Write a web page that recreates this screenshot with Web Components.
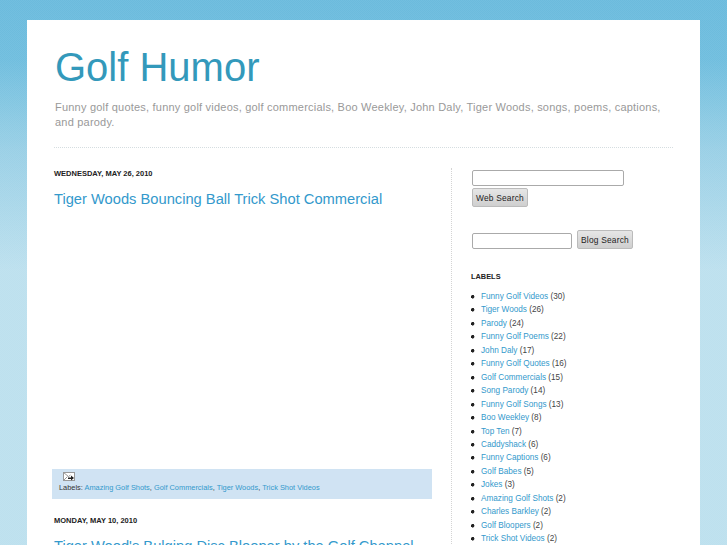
<!DOCTYPE html>
<html>
<head>
<meta charset="utf-8">
<title>Golf Humor</title>
<style>
html, body { height: 100%; }
body {
    margin: 0;
    height: 545px;
    overflow: hidden;
    font-family: "Liberation Sans", Arial, sans-serif;
    background:
        repeating-conic-gradient(rgba(255,255,255,.05) 0 25%, transparent 0 50%) 0 0 / 2px 2px,
        linear-gradient(to bottom, #6bbbdd 0, #70bede 60px, #9ad0e6 150px, #bde0ee 270px, #bde0ee 545px);
}
</style>
</head>
<body>
<blog-page>
    <blog-header slot="header" title="Golf Humor">Funny golf quotes, funny golf videos, golf commercials, Boo Weekley, John Daly, Tiger Woods, songs, poems, captions, and parody.</blog-header>
    <div slot="main">
        <blog-post date="Wednesday, May 26, 2010" title="Tiger Woods Bouncing Ball Trick Shot Commercial" labels="Amazing Golf Shots,Golf Commercials,Tiger Woods,Trick Shot Videos" body="260"></blog-post>
        <blog-post date="Monday, May 10, 2010" title="Tiger Wood's Bulging Disc Blooper by the Golf Channel" body="250"></blog-post>
    </div>
    <blog-sidebar slot="side"></blog-sidebar>
</blog-page>

<script>
class BlogPage extends HTMLElement {
    constructor() {
        super();
        this.attachShadow({ mode: 'open' });
        this.shadowRoot.innerHTML = `
        <style>
            :host { display: block; padding: 20px 27px 0; }
            .card { background: #fff; height: 525px; padding: 0 27px; box-sizing: border-box; overflow: hidden; }
            .cols { display: grid; grid-template-columns: 397px 1fr; }
            .main { padding-top: 20px; min-width: 0; }
            .side { margin-top: 20px; border-left: 1px dotted #d4d4d4; padding-left: 20px; }
        </style>
        <div class="card">
            <slot name="header"></slot>
            <div class="cols">
                <div class="main"><slot name="main"></slot></div>
                <div class="side"><slot name="side"></slot></div>
            </div>
        </div>`;
    }
}
customElements.define('blog-page', BlogPage);

class BlogHeader extends HTMLElement {
    constructor() {
        super();
        this.attachShadow({ mode: 'open' });
        this.shadowRoot.innerHTML = `
        <style>
            :host { display: block; border-bottom: 1px dotted #d5dde0; height: 128px; box-sizing: border-box; }
            h1 { margin: 0 0 0 1px; padding-top: 22px; font: normal 40px/50px "Liberation Sans", Arial, sans-serif; color: #3399bb; }
            p { margin: 8px 0 0 1px; font-size: 11px; line-height: 15px; letter-spacing: .21px; color: #999; }
        </style>
        <h1>${this.getAttribute('title')}</h1>
        <p><slot></slot></p>`;
    }
}
customElements.define('blog-header', BlogHeader);

class BlogPost extends HTMLElement {
    constructor() {
        super();
        this.attachShadow({ mode: 'open' });
        const labels = this.getAttribute('labels');
        const links = labels ? labels.split(',').map(l => `<a>${l}</a>`).join(', ') : '';
        this.shadowRoot.innerHTML = `
        <style>
            :host { display: block; font-family: "Liberation Sans", Arial, sans-serif; }
            h2 { margin: 0; font-size: 7.5px; line-height: 12px; font-weight: bold; text-transform: uppercase; color: #222; }
            h3 { margin: 9px 0 0; font-size: 14.7px; line-height: 20px; font-weight: normal; color: #3399cc; white-space: nowrap; }
            .body { height: ${this.getAttribute('body')}px; }
            .foot { background: #d0e3f3; margin-left: -2px; height: 30px; width: 380px; padding: 3px 7px 0; box-sizing: border-box; margin-bottom: 16px; font-size: 7.4px; line-height: 11px; color: #333; }
            .foot svg { display: block; margin-left: 4px; }
            a { color: #3399cc; }
        </style>
        <h2>${this.getAttribute('date')}</h2>
        <h3>${this.getAttribute('title')}</h3>
        <div class="body"></div>
        ${labels ? `<div class="foot">
            <svg width="12" height="10" viewBox="0 0 12 10"><rect x=".5" y=".5" width="11" height="8" fill="#fff" stroke="#999"/><path d="M.5.5l5 4 2-1.5M.5 8.5l4-4" fill="none" stroke="#999"/><path d="M5 5.5h3V3.5l3 2.5-3 2.5V7H5z" fill="#222"/></svg>
            Labels: ${links}
        </div>` : ''}`;
    }
}
customElements.define('blog-post', BlogPost);

class BlogSidebar extends HTMLElement {
    constructor() {
        super();
        this.attachShadow({ mode: 'open' });
        const items = [['Funny Golf Videos',30],['Tiger Woods',26],['Parody',24],['Funny Golf Poems',22],['John Daly',17],['Funny Golf Quotes',16],['Golf Commercials',15],['Song Parody',14],['Funny Golf Songs',13],['Boo Weekley',8],['Top Ten',7],['Caddyshack',6],['Funny Captions',6],['Golf Babes',5],['Jokes',3],['Amazing Golf Shots',2],['Charles Barkley',2],['Golf Bloopers',2],['Trick Shot Videos',2]];
        this.shadowRoot.innerHTML = `
        <style>
            :host { display: block; font-family: "Liberation Sans", Arial, sans-serif; color: #444; }
            input { display: block; box-sizing: border-box; height: 16px; margin: 0; padding: 0; background: #fff; border: 1px solid #aaa; border-radius: 2px; }
            button { box-sizing: border-box; height: 19px; padding: 0; white-space: nowrap; font: 8.4px "Liberation Sans", Arial, sans-serif; letter-spacing: .2px; color: #222; background: linear-gradient(#e6e6e6, #cfcfcf); border: 1px solid #bbb; border-radius: 2px; }
            .web { padding-top: 2px; }
            .web input { width: 152px; }
            .web button { display: block; margin-top: 2px; width: 56px; }
            .blog { display: flex; align-items: flex-end; gap: 5px; margin-top: 23px; }
            .blog input { width: 100px; }
            .blog button { width: 56px; }
            h2 { margin: 22px 0 0 -1px; font-size: 7.4px; line-height: 12px; font-weight: bold; color: #222; }
            ul { margin: 7px 0 0 -2px; padding: 0; list-style: none; font-size: 8.2px; line-height: 13.45px; }
            li { padding-left: 11px; background: radial-gradient(circle at 2.7px 6.8px, #222 1.5px, transparent 2px); }
            a { color: #3399cc; }
        </style>
        <div class="web"><input type="text"><button>Web Search</button></div>
        <div class="blog"><input type="text"><button>Blog Search</button></div>
        <h2>LABELS</h2>
        <ul>${items.map(i => `<li><a>${i[0]}</a> (${i[1]})</li>`).join('')}</ul>`;
    }
}
customElements.define('blog-sidebar', BlogSidebar);
</script>
</body>
</html>
